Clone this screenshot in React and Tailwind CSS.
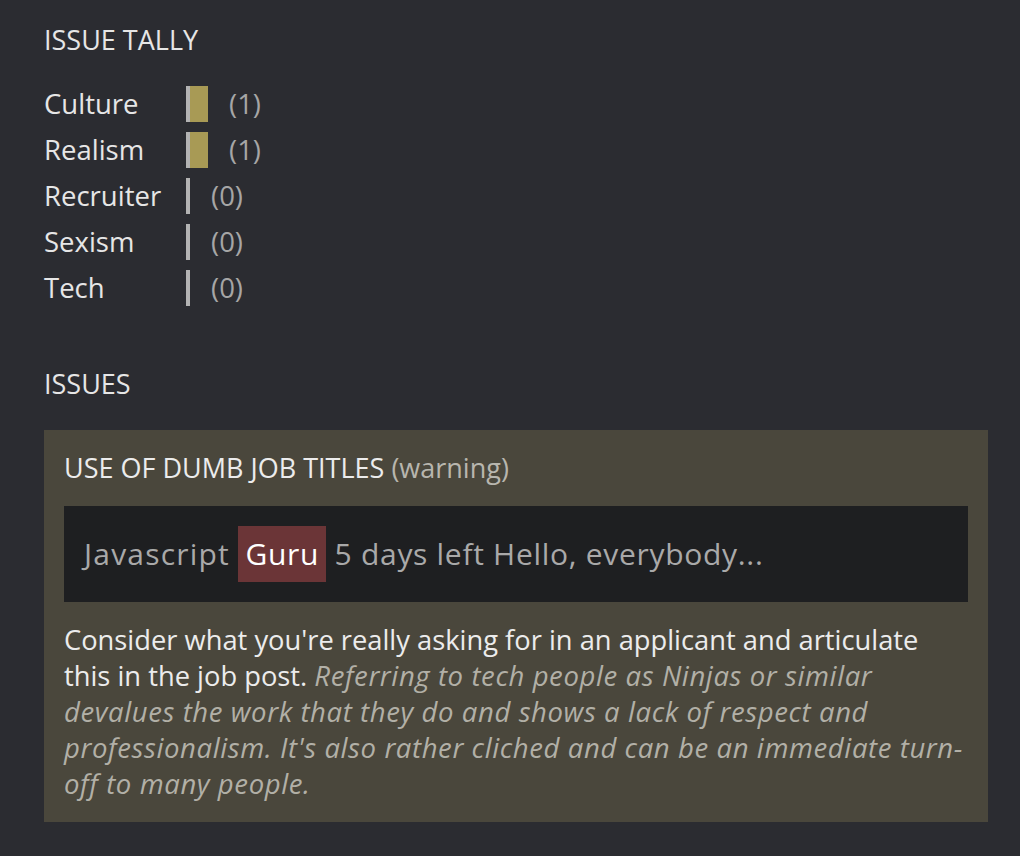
const tally = [
  { label: 'Culture', count: 1 },
  { label: 'Realism', count: 1 },
  { label: 'Recruiter', count: 0 },
  { label: 'Sexism', count: 0 },
  { label: 'Tech', count: 0 },
]

const App = () => {
  return (
    <div
      className="min-h-screen bg-[#2b2c31] px-[44px] pt-[22px] pb-[34px] text-[27px] leading-[36px] text-[#e6e6e6]"
      style={{ fontFamily: '"Open Sans", Lato, sans-serif' }}
    >
      {/* Tally */}
      <h2 className="font-normal">ISSUE TALLY</h2>
      <ul className="mt-[23px] text-[27.5px]">
        {tally.map((t) => (
          <li key={t.label} className="flex items-center h-[46px]">
            <span className="w-[142px] shrink-0">{t.label}</span>
            <span className="h-[36px] border-l-4 border-[#b3b3b3] flex">
              {t.count > 0 && <span className="w-[18px] bg-[#a89a55]" />}
            </span>
            <span className="ml-[21px] text-[#a6a6a6]">({t.count})</span>
          </li>
        ))}
      </ul>

      {/* Issues */}
      <h2 className="mt-[55px] font-normal">ISSUES</h2>
      <div className="mt-[28px] w-[944px] bg-[#4a473c] p-[20px]">
        <h3 className="font-normal text-[#ececec]">
          USE OF DUMB JOB TITLES <span className="text-[#b8b6ae]">(warning)</span>
        </h3>
        <div className="mt-[20px] bg-[#1e1f21] p-[20px] text-[30px] leading-[56px] tracking-[0.7px] text-[#a9a9a9]">
          <span className="tracking-[1.2px]">Javascript</span>{' '}
          <span className="inline-block bg-[#6b3537] px-[7px] text-white">Guru</span>{' '}
          5 days left Hello, everybody...
        </div>
        <p className="mt-[20px] text-[27.3px] text-[#ececec]">
          Consider what you're really asking for in an applicant and articulate
          <br />
          this in the job post.{' '}
          <em className="text-[27.5px] tracking-[0.6px] text-[#b2b0a7]">
            Referring to tech people as Ninjas or similar
            <br />
            devalues the work that they do and shows a lack of respect and
            <br />
            professionalism. It's also rather cliched and can be an immediate turn-
            <br />
            off to many people.
          </em>
        </p>
      </div>
    </div>
  )
}

export default App
